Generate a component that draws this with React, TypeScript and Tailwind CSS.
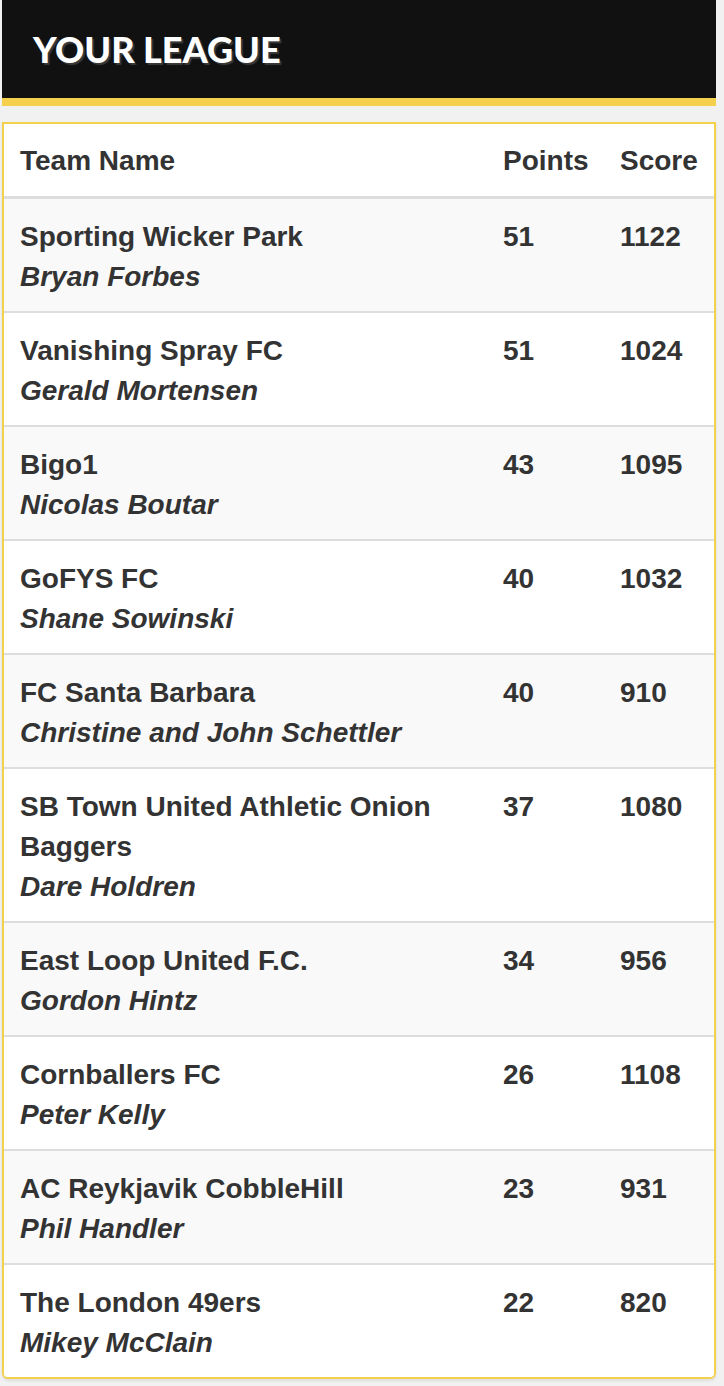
const TEAMS = [
  { team: 'Sporting Wicker Park', owner: 'Bryan Forbes', points: 51, score: 1122 },
  { team: 'Vanishing Spray FC', owner: 'Gerald Mortensen', points: 51, score: 1024 },
  { team: 'Bigo1', owner: 'Nicolas Boutar', points: 43, score: 1095 },
  { team: 'GoFYS FC', owner: 'Shane Sowinski', points: 40, score: 1032 },
  { team: 'FC Santa Barbara', owner: 'Christine and John Schettler', points: 40, score: 910 },
  { team: 'SB Town United Athletic Onion Baggers', owner: 'Dare Holdren', points: 37, score: 1080 },
  { team: 'East Loop United F.C.', owner: 'Gordon Hintz', points: 34, score: 956 },
  { team: 'Cornballers FC', owner: 'Peter Kelly', points: 26, score: 1108 },
  { team: 'AC Reykjavik CobbleHill', owner: 'Phil Handler', points: 23, score: 931 },
  { team: 'The London 49ers', owner: 'Mikey McClain', points: 22, score: 820 },
];

export default function App() {
  return (
    <div className="min-h-[1386px] bg-[#f1f1f1] pb-2 text-[#333] [font-family:'Liberation_Sans',Arial,sans-serif]">
      <div className="ml-[2px] w-[714px]">
        <header className="flex h-[106px] items-center border-b-8 border-[#f5d04c] bg-[#111] pl-[31px]">
          <h1 className="text-[36px] font-black leading-none text-white [font-family:Lato,sans-serif] [text-shadow:2px_2px_1px_#3a3a3a]">
            YOUR LEAGUE
          </h1>
        </header>

        <div className="mt-4 overflow-hidden rounded-b-md border-2 border-[#f5d04c] bg-white shadow-[0_2px_3px_rgba(0,0,0,0.08)]">
          <div className="grid grid-cols-[1fr_117px_110px] border-b-[3px] border-[#ddd] text-[28px] font-bold leading-[40px]">
            <div className="px-4 pt-[17px] pb-[15px]">Team Name</div>
            <div className="px-4 pt-[17px] pb-[15px]">Points</div>
            <div className="px-4 pt-[17px] pb-[15px]">Score</div>
          </div>

          {TEAMS.map((row, i) => (
            <div
              key={row.team}
              className={`grid grid-cols-[1fr_117px_110px] text-[28px] font-bold leading-[40px] ${
                i > 0 ? 'border-t-2 border-[#ddd]' : ''
              } ${i % 2 === 0 ? 'bg-[#f9f9f9]' : 'bg-white'}`}
            >
              <div className="px-4 pt-[18px] pb-[14px]">
                <div>{row.team}</div>
                <div className="italic">{row.owner}</div>
              </div>
              <div className="px-4 pt-[18px] pb-[14px]">{row.points}</div>
              <div className="px-4 pt-[18px] pb-[14px]">{row.score}</div>
            </div>
          ))}
        </div>
      </div>
    </div>
  );
}
